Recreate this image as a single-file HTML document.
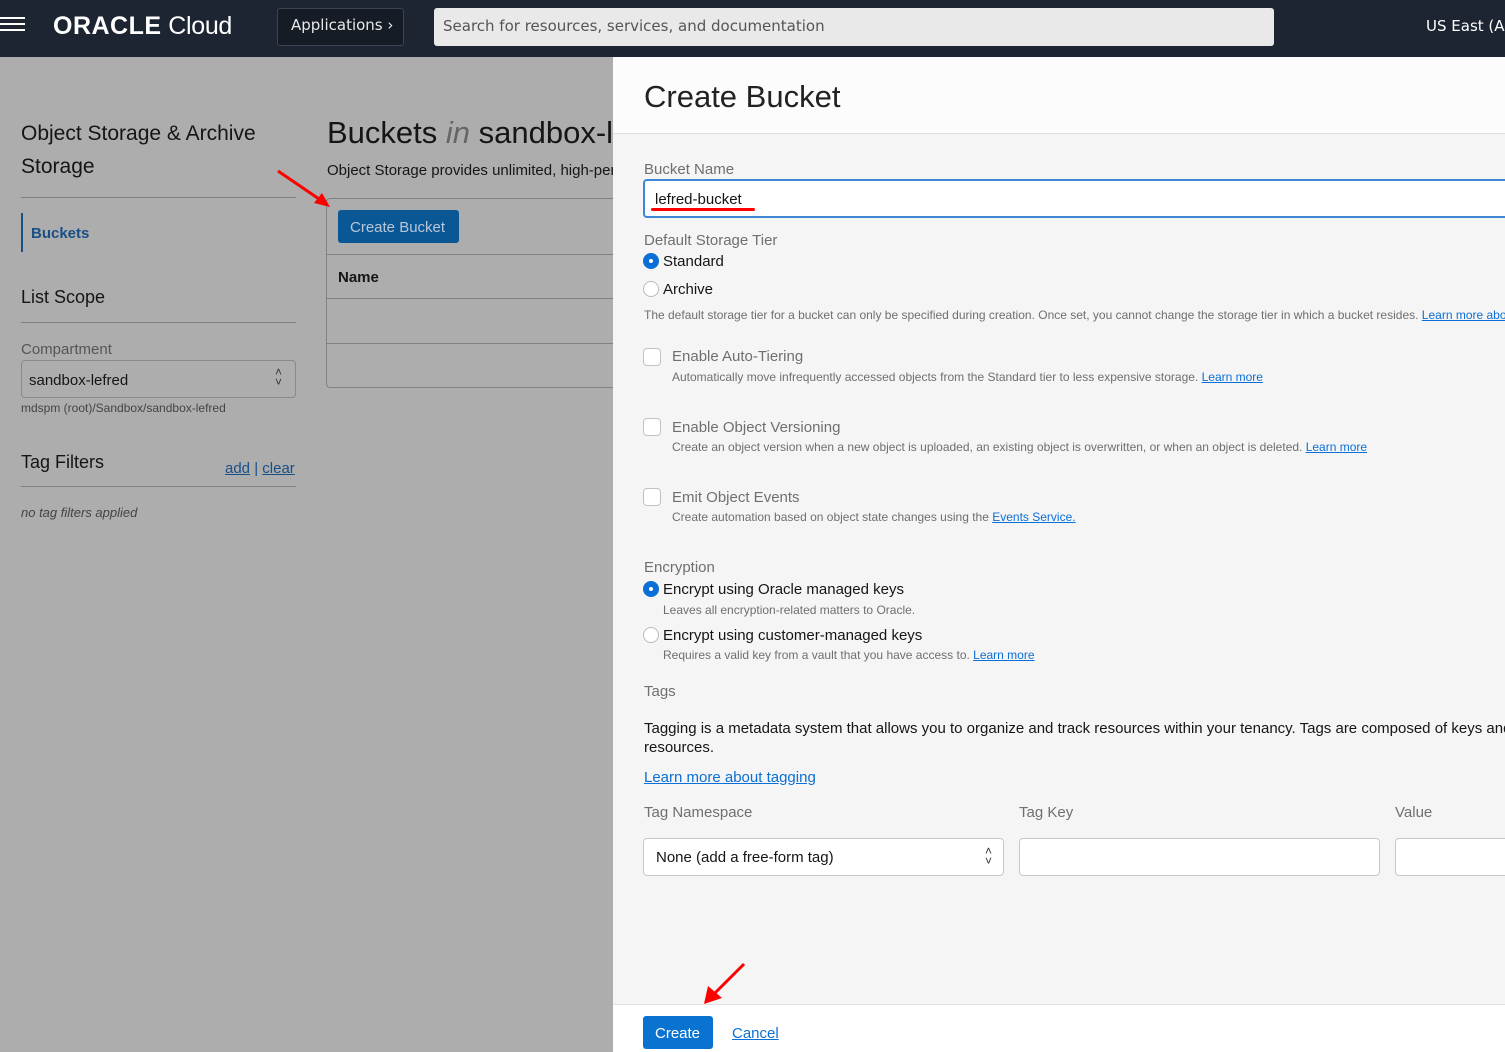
<!DOCTYPE html>
<html style="overflow:hidden;width:1505px;height:1052px"><head><meta charset="utf-8"><style>
*{margin:0;padding:0;box-sizing:border-box}
body{width:1505px;height:1052px;overflow:hidden;position:relative;background:#adadad;font-family:"Liberation Sans",Arial,sans-serif;color:#161513}
.t{position:absolute;white-space:nowrap;line-height:1}
a,.lk{color:#0a6fd6;text-decoration:underline}
.hr{position:absolute;height:1px;background:#7e8185}
.cb{position:absolute;width:18px;height:18px;border:1px solid #c2c2c2;border-radius:4px;background:#fff}
.rd{position:absolute;width:16px;height:16px;border-radius:50%;border:1px solid #bbb;background:#fff}
.rd.on{background:#0a6fd6;border-color:#0a6fd6}
.rd.on:after{content:"";position:absolute;left:5px;top:5px;width:4px;height:4px;border-radius:50%;background:#fff}
.g{color:#6f6f6f}
#w{position:absolute;left:0;top:0;width:1505px;height:1052px;overflow:hidden}
</style></head><body><div id="w">
<div style="position:absolute;left:0;top:0;width:1505px;height:57px;background:#1d2532"></div>
<div style="position:absolute;left:0;top:17px;width:25px;height:2px;background:#fff;box-shadow:0 6px 0 #fff,0 12px 0 #fff"></div>
<div class="t" style="left:53px;top:14px;font-size:25px;color:#fff;letter-spacing:-0.3px"><b style="font-weight:600;letter-spacing:0.5px">ORACLE</b> <span style="font-weight:300">Cloud</span></div>
<div style="position:absolute;left:277px;top:8px;width:127px;height:38px;border:1px solid #3c4452;border-radius:3px;background:#161c26"></div>
<div class="t" style="left:291px;top:18px;color:#e8e8e8;font-family:'DejaVu Sans',sans-serif;font-size:15px">Applications ›</div>
<div style="position:absolute;left:434px;top:8px;width:840px;height:38px;background:#e9e9e9;border-radius:3px"></div>
<div class="t" style="left:443px;top:19px;font-size:15px;color:#555;font-family:'DejaVu Sans',sans-serif">Search for resources, services, and documentation</div>
<div class="t" style="left:1426px;top:19px;color:#fff;font-family:'DejaVu Sans',sans-serif;font-size:15px">US East (Ashburn)</div>

<div class="t" style="left:21px;top:123px;font-size:21px">Object Storage &amp; Archive</div>
<div class="t" style="left:21px;top:156px;font-size:21px">Storage</div>
<div class="hr" style="left:21px;top:197px;width:275px"></div>
<div style="position:absolute;left:21px;top:213px;width:2px;height:39px;background:#1a4f86"></div>
<div class="t" style="left:31px;top:226px;font-size:15px;color:#1a4f86;font-weight:bold">Buckets</div>
<div class="t" style="left:21px;top:288px;font-size:18px">List Scope</div>
<div class="hr" style="left:21px;top:322px;width:275px"></div>
<div class="t" style="left:21px;top:342px;font-size:15px;color:#555">Compartment</div>
<div style="position:absolute;left:21px;top:360px;width:275px;height:38px;border:1px solid #8a8a8a;border-radius:4px"></div>
<div class="t" style="left:29px;top:373px;font-size:15px">sandbox-lefred</div>
<div class="t" style="left:275px;top:367px;font-size:12px;line-height:10px;color:#333">˄<br>˅</div>
<div class="t" style="left:21px;top:402px;font-size:12px;color:#444">mdspm (root)/Sandbox/sandbox-lefred</div>
<div class="t" style="left:21px;top:453px;font-size:18px">Tag Filters</div>
<div class="t" style="left:225px;top:461px;font-size:15px;color:#1a4f86"><u>add</u> | <u>clear</u></div>
<div class="hr" style="left:21px;top:486px;width:275px"></div>
<div class="t" style="left:21px;top:506px;font-size:13px;font-style:italic;color:#444">no tag filters applied</div>

<div class="t" style="left:327px;top:117px;font-size:31px">Buckets <i style="color:#666">in</i> sandbox-lefred</div>
<div class="t" style="left:327px;top:163px;font-size:15px">Object Storage provides unlimited, high-performance</div>
<div style="position:absolute;left:326px;top:198px;width:300px;height:190px;border:1px solid #7e8185;border-radius:4px"></div>
<div style="position:absolute;left:338px;top:210px;width:121px;height:33px;background:#0a5796;border-radius:3px"></div>
<div class="t" style="left:350px;top:220px;font-size:15px;color:#b8c8d8">Create Bucket</div>
<div class="hr" style="left:326px;top:254px;width:300px"></div>
<div class="t" style="left:338px;top:270px;font-size:15px;font-weight:bold">Name</div>
<div class="hr" style="left:326px;top:298px;width:300px"></div>
<div class="hr" style="left:326px;top:343px;width:300px"></div>
<svg style="position:absolute;left:270px;top:165px" width="70" height="50"><line x1="8" y1="6" x2="52" y2="36" stroke="#f00" stroke-width="3"/><polygon points="60,42 44,38 52,28" fill="#f00"/></svg>

<div style="position:absolute;left:613px;top:57px;width:892px;height:995px;background:#f5f5f5"></div>
<div style="position:absolute;left:613px;top:57px;width:892px;height:77px;background:#fcfcfc;border-bottom:1px solid #e0e0e0"></div>
<div class="t" style="left:644px;top:81px;font-size:31px;color:#222">Create Bucket</div>

<div class="t g" style="left:644px;top:162px;font-size:15px">Bucket Name</div>
<div style="position:absolute;left:643px;top:179px;width:870px;height:39px;background:#fff;border:2px solid #3f86d6;border-radius:4px"></div>
<div class="t" style="left:655px;top:192px;font-size:15px">lefred-bucket</div>
<div style="position:absolute;left:651px;top:208px;width:104px;height:3px;background:#f00;border-radius:2px"></div>
<div class="t g" style="left:644px;top:233px;font-size:15px">Default Storage Tier</div>
<div class="rd on" style="left:643px;top:253px"></div>
<div class="t" style="left:663px;top:254px;font-size:15px">Standard</div>
<div class="rd" style="left:643px;top:281px"></div>
<div class="t" style="left:663px;top:282px;font-size:15px">Archive</div>
<div class="t g" style="left:644px;top:309px;font-size:12px">The default storage tier for a bucket can only be specified during creation. Once set, you cannot change the storage tier in which a bucket resides. <span class="lk">Learn more about</span></div>

<div class="cb" style="left:643px;top:348px"></div>
<div class="t g" style="left:672px;top:349px;font-size:15px">Enable Auto-Tiering</div>
<div class="t g" style="left:672px;top:371px;font-size:12px">Automatically move infrequently accessed objects from the Standard tier to less expensive storage. <span class="lk">Learn more</span></div>
<div class="cb" style="left:643px;top:418px"></div>
<div class="t g" style="left:672px;top:420px;font-size:15px">Enable Object Versioning</div>
<div class="t g" style="left:672px;top:441px;font-size:12px">Create an object version when a new object is uploaded, an existing object is overwritten, or when an object is deleted. <span class="lk">Learn more</span></div>
<div class="cb" style="left:643px;top:488px"></div>
<div class="t g" style="left:672px;top:490px;font-size:15px">Emit Object Events</div>
<div class="t g" style="left:672px;top:511px;font-size:12px">Create automation based on object state changes using the <span class="lk">Events Service.</span></div>

<div class="t g" style="left:644px;top:560px;font-size:15px">Encryption</div>
<div class="rd on" style="left:643px;top:581px"></div>
<div class="t" style="left:663px;top:582px;font-size:15px">Encrypt using Oracle managed keys</div>
<div class="t g" style="left:663px;top:604px;font-size:12px">Leaves all encryption-related matters to Oracle.</div>
<div class="rd" style="left:643px;top:627px"></div>
<div class="t" style="left:663px;top:628px;font-size:15px">Encrypt using customer-managed keys</div>
<div class="t g" style="left:663px;top:649px;font-size:12px">Requires a valid key from a vault that you have access to. <span class="lk">Learn more</span></div>
<div class="t g" style="left:644px;top:684px;font-size:15px">Tags</div>
<div class="t" style="left:644px;top:721px;font-size:15px">Tagging is a metadata system that allows you to organize and track resources within your tenancy. Tags are composed of keys and values that can be attached to</div>
<div class="t" style="left:644px;top:740px;font-size:15px">resources.</div>
<div class="t lk" style="left:644px;top:770px;font-size:15px">Learn more about tagging</div>
<div class="t g" style="left:644px;top:805px;font-size:15px">Tag Namespace</div>
<div class="t g" style="left:1019px;top:805px;font-size:15px">Tag Key</div>
<div class="t g" style="left:1395px;top:805px;font-size:15px">Value</div>
<div style="position:absolute;left:643px;top:838px;width:361px;height:38px;background:#fff;border:1px solid #c8c8c8;border-radius:4px"></div>
<div class="t" style="left:656px;top:850px;font-size:15px">None (add a free-form tag)</div>
<div class="t" style="left:985px;top:846px;font-size:12px;line-height:10px;color:#333">˄<br>˅</div>
<div style="position:absolute;left:1019px;top:838px;width:361px;height:38px;background:#fff;border:1px solid #c8c8c8;border-radius:4px"></div>
<div style="position:absolute;left:1395px;top:838px;width:110px;height:38px;background:#fff;border:1px solid #c8c8c8;border-right:none;border-radius:4px 0 0 4px"></div>

<div style="position:absolute;left:613px;top:1004px;width:892px;height:48px;background:#fff;border-top:1px solid #e2e2e2"></div>
<div style="position:absolute;left:643px;top:1016px;width:70px;height:33px;background:#0a72d1;border-radius:3px"></div>
<div class="t" style="left:655px;top:1026px;font-size:15px;color:#fff">Create</div>
<div class="t lk" style="left:732px;top:1026px;font-size:15px">Cancel</div>
<svg style="position:absolute;left:698px;top:958px" width="55" height="50"><line x1="46" y1="6" x2="16" y2="36" stroke="#f00" stroke-width="3"/><polygon points="6,46 10,28 24,40" fill="#f00"/></svg>
</div></body></html>
